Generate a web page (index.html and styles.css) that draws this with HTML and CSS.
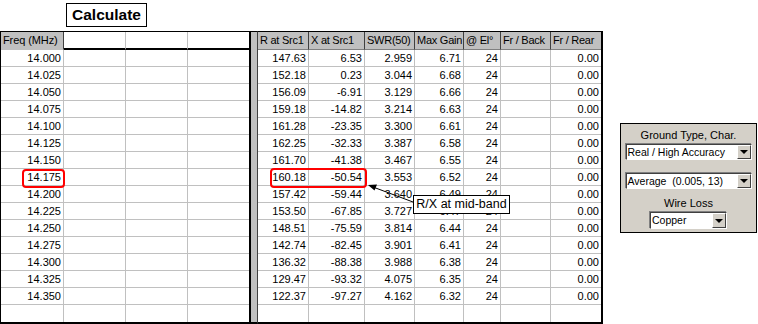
FILE: index.html
```html
<!DOCTYPE html>
<html>
<head>
<meta charset="utf-8">
<link rel="stylesheet" href="styles.css">
</head>
<body>
<div class="toolbar"><div class="calc">Calculate</div></div>
<div class="main">
  <div class="grid">
    <div class="tbl left">
      <div class="c hd freq">Freq (MHz)</div><div class="c hd blank"></div><div class="c hd blank"></div><div class="c hd blank last"></div>
      <div class="c n">14.000</div><div class="c"></div><div class="c"></div><div class="c"></div>
      <div class="c n">14.025</div><div class="c"></div><div class="c"></div><div class="c"></div>
      <div class="c n">14.050</div><div class="c"></div><div class="c"></div><div class="c"></div>
      <div class="c n">14.075</div><div class="c"></div><div class="c"></div><div class="c"></div>
      <div class="c n">14.100</div><div class="c"></div><div class="c"></div><div class="c"></div>
      <div class="c n">14.125</div><div class="c"></div><div class="c"></div><div class="c"></div>
      <div class="c n">14.150</div><div class="c"></div><div class="c"></div><div class="c"></div>
      <div class="c n">14.175</div><div class="c"></div><div class="c"></div><div class="c"></div>
      <div class="c n">14.200</div><div class="c"></div><div class="c"></div><div class="c"></div>
      <div class="c n">14.225</div><div class="c"></div><div class="c"></div><div class="c"></div>
      <div class="c n">14.250</div><div class="c"></div><div class="c"></div><div class="c"></div>
      <div class="c n">14.275</div><div class="c"></div><div class="c"></div><div class="c"></div>
      <div class="c n">14.300</div><div class="c"></div><div class="c"></div><div class="c"></div>
      <div class="c n">14.325</div><div class="c"></div><div class="c"></div><div class="c"></div>
      <div class="c n">14.350</div><div class="c"></div><div class="c"></div><div class="c"></div>
      <div class="c end"></div><div class="c end"></div><div class="c end"></div><div class="c end"></div>
    </div>
    <div class="sep"></div>
    <div class="tbl right">
      <div class="c rh">R at Src1</div><div class="c rh">X at Src1</div><div class="c rh">SWR(50)</div><div class="c rh">Max Gain</div><div class="c rh">@ El°</div><div class="c rh">Fr / Back</div><div class="c rh">Fr / Rear</div>
      <div class="c n">147.63</div><div class="c n">6.53</div><div class="c n">2.959</div><div class="c n">6.71</div><div class="c n">24</div><div class="c"></div><div class="c n">0.00</div>
      <div class="c n">152.18</div><div class="c n">0.23</div><div class="c n">3.044</div><div class="c n">6.68</div><div class="c n">24</div><div class="c"></div><div class="c n">0.00</div>
      <div class="c n">156.09</div><div class="c n">-6.91</div><div class="c n">3.129</div><div class="c n">6.66</div><div class="c n">24</div><div class="c"></div><div class="c n">0.00</div>
      <div class="c n">159.18</div><div class="c n">-14.82</div><div class="c n">3.214</div><div class="c n">6.63</div><div class="c n">24</div><div class="c"></div><div class="c n">0.00</div>
      <div class="c n">161.28</div><div class="c n">-23.35</div><div class="c n">3.300</div><div class="c n">6.61</div><div class="c n">24</div><div class="c"></div><div class="c n">0.00</div>
      <div class="c n">162.25</div><div class="c n">-32.33</div><div class="c n">3.387</div><div class="c n">6.58</div><div class="c n">24</div><div class="c"></div><div class="c n">0.00</div>
      <div class="c n">161.70</div><div class="c n">-41.38</div><div class="c n">3.467</div><div class="c n">6.55</div><div class="c n">24</div><div class="c"></div><div class="c n">0.00</div>
      <div class="c n">160.18</div><div class="c n">-50.54</div><div class="c n">3.553</div><div class="c n">6.52</div><div class="c n">24</div><div class="c"></div><div class="c n">0.00</div>
      <div class="c n">157.42</div><div class="c n">-59.44</div><div class="c n">3.640</div><div class="c n">6.49</div><div class="c n">24</div><div class="c"></div><div class="c n">0.00</div>
      <div class="c n">153.50</div><div class="c n">-67.85</div><div class="c n">3.727</div><div class="c n">6.47</div><div class="c n">24</div><div class="c"></div><div class="c n">0.00</div>
      <div class="c n">148.51</div><div class="c n">-75.59</div><div class="c n">3.814</div><div class="c n">6.44</div><div class="c n">24</div><div class="c"></div><div class="c n">0.00</div>
      <div class="c n">142.74</div><div class="c n">-82.45</div><div class="c n">3.901</div><div class="c n">6.41</div><div class="c n">24</div><div class="c"></div><div class="c n">0.00</div>
      <div class="c n">136.32</div><div class="c n">-88.38</div><div class="c n">3.988</div><div class="c n">6.38</div><div class="c n">24</div><div class="c"></div><div class="c n">0.00</div>
      <div class="c n">129.47</div><div class="c n">-93.32</div><div class="c n">4.075</div><div class="c n">6.35</div><div class="c n">24</div><div class="c"></div><div class="c n">0.00</div>
      <div class="c n">122.37</div><div class="c n">-97.27</div><div class="c n">4.162</div><div class="c n">6.32</div><div class="c n">24</div><div class="c"></div><div class="c n">0.00</div>
      <div class="c end"></div><div class="c end"></div><div class="c end"></div><div class="c end"></div><div class="c end"></div><div class="c end"></div><div class="c end"></div>
    </div>
    <div class="hl hl-freq"></div>
    <div class="hl hl-rx"></div>
    <svg class="arrow" width="60" height="30" viewBox="0 0 60 30">
      <line x1="47" y1="19" x2="7" y2="4" stroke="#000" stroke-width="1"/>
      <polygon points="2,2 11,1.5 8.5,7.5" fill="#000"/>
    </svg>
    <div class="callout">R/X at mid-band</div>
  </div>
  <div class="panel">
    <div class="ptitle">Ground Type, Char.</div>
    <div class="dd dd1"><span class="dtext">Real / High Accuracy</span><span class="dbtn"><i class="tri"></i></span></div>
    <div class="dd dd2"><span class="dtext">Average&nbsp;&nbsp;(0.005,&nbsp;13)</span><span class="dbtn"><i class="tri"></i></span></div>
    <div class="ptitle wl">Wire Loss</div>
    <div class="dd dd3"><span class="dtext">Copper</span><span class="dbtn"><i class="tri"></i></span></div>
  </div>
</div>
</body>
</html>
```
FILE: styles.css
```css
html, body {
  margin: 0;
  padding: 0;
  background: #fff;
}
body {
  font-family: "Liberation Sans", Arial, sans-serif;
  font-size: 11px;
  color: #000;
  width: 758px;
  height: 324px;
  overflow: hidden;
}
.toolbar {
  height: 31px;
  padding-top: 3px;
  padding-left: 66px;
  box-sizing: border-box;
}
.calc {
  width: 81px;
  height: 24px;
  border: 1px solid #000;
  box-sizing: border-box;
  font-weight: bold;
  font-size: 15.5px;
  line-height: 22px;
  text-align: center;
}
.main {
  display: flex;
  align-items: flex-start;
}
.grid {
  position: relative;
  display: flex;
}
.tbl {
  display: grid;
  grid-auto-rows: 17px;
}
.left {
  grid-template-columns: 63px 62px 62px 61px;
  grid-template-rows: 18px;
  border-top: 1px solid #000;
  border-left: 1px solid #000;
  border-right: 2px solid #000;
  border-bottom: 2px solid #000;
}
.right {
  grid-template-columns: 51px 56px 50px 49px 37px 50px 50px;
  grid-template-rows: 18px;
  border-top: 1px solid #000;
  border-left: 1px solid #404040;
  border-right: 2px solid #000;
  border-bottom: 2px solid #000;
}
.sep {
  width: 6px;
  background: #c0c0c0;
  border-top: 1px solid #000;
  border-bottom: 2px solid #000;
}
.c {
  box-sizing: border-box;
  border-right: 1px solid #c0c0c0;
  border-bottom: 1px solid #c0c0c0;
  line-height: 16px;
  padding: 0 2px;
  white-space: nowrap;
  overflow: hidden;
}
.c:nth-child(4n) {
  border-right: none;
}
.right .c {
  border-right: 1px solid #c0c0c0;
}
.right .c:nth-child(7n) {
  border-right: none;
}
.c.end {
  border-bottom: none;
}
.n {
  text-align: right;
}
.hd.freq {
  background: #c0c0c0;
  border-right: 1px solid #404040;
  border-bottom: 1px solid #c0c0c0;
  padding: 0 0 0 2px;
  line-height: 17px;
  letter-spacing: -0.1px;
}
.hd.blank {
  background: #fff;
  border-bottom: 2px solid #000;
}
.right .c.rh {
  background: #c0c0c0;
  border-right: 1px solid #404040;
  border-bottom: 1px solid #808080;
  line-height: 17px;
  padding: 0 0 0 2px;
  letter-spacing: -0.25px;
}
.right .c.rh:nth-child(7) {
  border-right: none;
}
.hl {
  position: absolute;
  border: 2px solid #f00;
  border-radius: 4px;
  box-sizing: border-box;
}
.hl-freq {
  left: 22px;
  top: 138px;
  width: 43px;
  height: 19px;
}
.hl-rx {
  left: 270px;
  top: 137px;
  width: 97px;
  height: 20px;
}
.arrow {
  position: absolute;
  left: 366px;
  top: 152px;
}
.callout {
  position: absolute;
  left: 413px;
  top: 164px;
  width: 97px;
  height: 19px;
  box-sizing: border-box;
  border: 1px solid #000;
  background: #fff;
  font-size: 12.5px;
  line-height: 17px;
  text-align: center;
  white-space: nowrap;
}
.panel {
  margin-left: 17px;
  margin-top: 92px;
  width: 137px;
  height: 110px;
  box-sizing: border-box;
  border: 1px solid #000;
  background: #d4d0c8;
  display: flex;
  flex-direction: column;
  align-items: center;
}
.ptitle {
  font-size: 11px;
  line-height: 12px;
  margin-top: 5px;
  color: #000;
}
.ptitle.wl {
  margin-top: 8px;
}
.dd {
  display: flex;
  align-items: stretch;
  background: #fff;
  box-sizing: border-box;
  border-top: 1px solid #404040;
  border-left: 1px solid #404040;
  border-right: 1px solid #fff;
  border-bottom: 1px solid #fff;
  box-shadow: -1px -1px 0 #808080;
  height: 16px;
}
.dd1 {
  width: 126px;
  margin-top: 3px;
}
.dd2 {
  width: 126px;
  margin-top: 13px;
}
.dd3 {
  width: 77px;
  margin-top: 3px;
  height: 17px;
}
.dtext {
  flex: 1;
  font-size: 10.5px;
  line-height: 14px;
  padding-left: 1px;
  white-space: nowrap;
  overflow: hidden;
}
.dbtn {
  width: 14px;
  box-sizing: border-box;
  background: #d4d0c8;
  border-top: 1px solid #fff;
  border-left: 1px solid #fff;
  border-right: 1px solid #404040;
  border-bottom: 1px solid #404040;
  display: flex;
  align-items: center;
  justify-content: center;
}
.tri {
  width: 0;
  height: 0;
  border-left: 4px solid transparent;
  border-right: 4px solid transparent;
  border-top: 4px solid #000;
}
```
